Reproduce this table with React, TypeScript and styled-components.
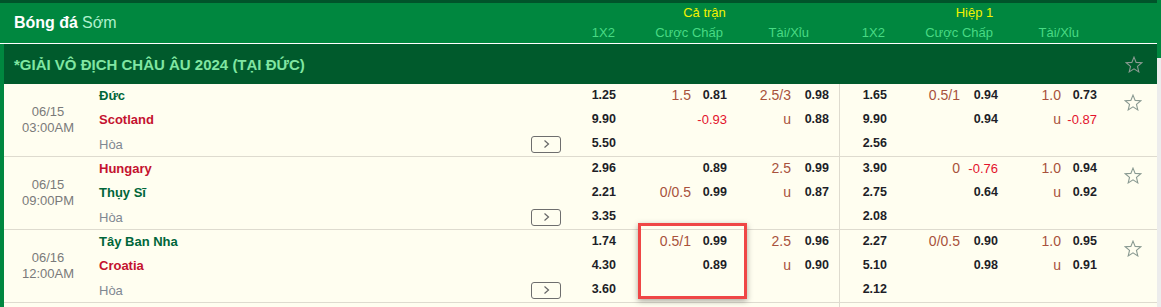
import React from "react";
import styled, { createGlobalStyle } from "styled-components";

const Global = createGlobalStyle`
  html, body { margin: 0; padding: 0; overflow: hidden; background: #f0f0f0; }
  body { font-family: "Liberation Sans", Arial, sans-serif; }
  * { box-sizing: border-box; }
`;

const COLS = "88px 474px 50px 75px 36px 64px 38px 11px 47px 73px 38px 63px 36px 60px";

const Page = styled.div`
  position: relative;
  width: 1161px;
  height: 307px;
  overflow: hidden;
`;

const TopStrip = styled.div`
  height: 3px;
  background: #00542a;
`;

const Frame = styled.div`
  display: flex;
`;

const Main = styled.div`
  width: 1157px;
  border-left: 4px solid #00873f;
  background: #fffef0;
`;

const ScrollTrack = styled.div`
  width: 4px;
  background: #ececec;
  margin-top: -3px;
  display: flex;
  flex-direction: column;
`;

const ScrollThumb = styled.div`
  height: 58px;
  background: #00873f;
`;

const Header = styled.div`
  display: grid;
  grid-template-columns: ${COLS};
  grid-template-rows: 19px 21px;
  height: 41px;
  background: #00873f;
  border-bottom: 1px solid #ffffff;
  margin-left: -4px;
  padding-left: 4px;
`;

const Title = styled.div`
  grid-column: 1 / 3;
  grid-row: 1 / 3;
  display: flex;
  align-items: center;
  padding-left: 10px;
  font-size: 16px;
  color: #aef0cc;
  b { color: #ffffff; font-weight: bold; margin-right: 4px; }
`;

const Group = styled.div<{ $from: number; $to: number; $shift: number }>`
  grid-row: 1;
  grid-column: ${(p) => p.$from} / ${(p) => p.$to};
  padding-left: ${(p) => p.$shift}px;
  text-align: center;
  font-size: 13px;
  line-height: 19px;
  color: #f2f200;
`;

const Label = styled.div<{ $from: number; $to: number; $pr: number }>`
  grid-row: 2;
  grid-column: ${(p) => p.$from} / ${(p) => p.$to};
  padding-right: ${(p) => p.$pr}px;
  text-align: right;
  font-size: 13px;
  line-height: 21px;
  color: #48da84;
  white-space: nowrap;
`;

const League = styled.div`
  height: 40px;
  background: #005a2c;
  display: flex;
  align-items: center;
  justify-content: space-between;
  padding: 0 14px 0 10px;
  font-size: 15px;
  font-weight: bold;
  color: #80e6a2;
`;

const Row = styled.div`
  display: grid;
  grid-template-columns: ${COLS};
  border-bottom: 1px solid #dedbcf;
`;

const DateCell = styled.div`
  display: flex;
  flex-direction: column;
  justify-content: center;
  align-items: center;
  font-size: 13px;
  line-height: 16px;
  color: #7a7a7a;
`;

const Stack = styled.div<{ $divider?: boolean }>`
  display: flex;
  flex-direction: column;
  align-items: flex-end;
  border-right: ${(p) => (p.$divider ? "1px solid #dedbcf" : "none")};
`;

const Line = styled.div`
  height: 24px;
  line-height: 23px;
  white-space: nowrap;
`;

const TeamCell = styled.div`
  display: flex;
  flex-direction: column;
  padding: 0 5px 0 7px;
`;

const Team = styled(Line)<{ $c: "g" | "r" }>`
  font-size: 13px;
  font-weight: bold;
  color: ${(p) => (p.$c === "g" ? "#00663a" : "#c4122f")};
`;

const DrawLine = styled(Line)`
  display: flex;
  justify-content: space-between;
  align-items: center;
`;

const Draw = styled.span`
  font-size: 13px;
  color: #7f8892;
  line-height: 23px;
`;

const MoreButton = styled.span`
  width: 30px;
  height: 17px;
  border: 1px solid #6e6e6e;
  border-radius: 3px;
  background: #fffef0;
  display: flex;
  align-items: center;
  justify-content: center;
`;

const Odd = styled(Line)<{ $neg?: boolean }>`
  font-size: ${(p) => (p.$neg ? "13px" : "12.5px")};
  font-weight: ${(p) => (p.$neg ? "normal" : "bold")};
  color: ${(p) => (p.$neg ? "#e3132c" : "#1e1e28")};
`;

const Hdp = styled(Line)`
  font-size: 14px;
  color: #a8523c;
`;

const StarCell = styled.div`
  padding: 10px 0 0 27px;
`;

const Highlight = styled.div`
  position: absolute;
  left: 638px;
  top: 223px;
  width: 109px;
  height: 76px;
  border: 3px solid #ef4646;
  box-shadow: 0 2px 6px rgba(0, 0, 0, 0.35);
`;

const Star = () => (
  <svg width="18" height="17" viewBox="0 0 24 23">
    <polygon
      points="12,1.5 14.9,8.6 22.5,9.1 16.7,14 18.5,21.5 12,17.4 5.5,21.5 7.3,14 1.5,9.1 9.1,8.6"
      fill="none"
      stroke="#8a9a92"
      strokeWidth="1.5"
      strokeLinejoin="miter"
    />
  </svg>
);

const Chevron = () => (
  <svg width="7" height="10" viewBox="0 0 7 10">
    <path d="M1.5 1.5 L5.5 5 L1.5 8.5" fill="none" stroke="#666" strokeWidth="1.2" />
  </svg>
);

type V = string | null;
type Odds = { v: string; neg?: boolean } | null;

type Match = {
  date: string;
  time: string;
  teams: [string, "g" | "r"][];
  x12: string[];
  hdpLine: V[];
  hdp: Odds[];
  ouLine: V[];
  ou: Odds[];
  hx12: string[];
  hHdpLine: V[];
  hHdp: Odds[];
  hOuLine: V[];
  hOu: Odds[];
};

const o = (v: string): Odds => ({ v, neg: v.startsWith("-") });

const matches: Match[] = [
  {
    date: "06/15",
    time: "03:00AM",
    teams: [["Đức", "g"], ["Scotland", "r"]],
    x12: ["1.25", "9.90", "5.50"],
    hdpLine: ["1.5", null],
    hdp: [o("0.81"), o("-0.93")],
    ouLine: ["2.5/3", "u"],
    ou: [o("0.98"), o("0.88")],
    hx12: ["1.65", "9.90", "2.56"],
    hHdpLine: ["0.5/1", null],
    hHdp: [o("0.94"), o("0.94")],
    hOuLine: ["1.0", "u"],
    hOu: [o("0.73"), o("-0.87")],
  },
  {
    date: "06/15",
    time: "09:00PM",
    teams: [["Hungary", "r"], ["Thụy Sĩ", "g"]],
    x12: ["2.96", "2.21", "3.35"],
    hdpLine: [null, "0/0.5"],
    hdp: [o("0.89"), o("0.99")],
    ouLine: ["2.5", "u"],
    ou: [o("0.99"), o("0.87")],
    hx12: ["3.90", "2.75", "2.08"],
    hHdpLine: ["0", null],
    hHdp: [o("-0.76"), o("0.64")],
    hOuLine: ["1.0", "u"],
    hOu: [o("0.94"), o("0.92")],
  },
  {
    date: "06/16",
    time: "12:00AM",
    teams: [["Tây Ban Nha", "g"], ["Croatia", "r"]],
    x12: ["1.74", "4.30", "3.60"],
    hdpLine: ["0.5/1", null],
    hdp: [o("0.99"), o("0.89")],
    ouLine: ["2.5", "u"],
    ou: [o("0.96"), o("0.90")],
    hx12: ["2.27", "5.10", "2.12"],
    hHdpLine: ["0/0.5", null],
    hHdp: [o("0.90"), o("0.98")],
    hOuLine: ["1.0", "u"],
    hOu: [o("0.95"), o("0.91")],
  },
  {
    date: "06/16",
    time: "03:00AM",
    teams: [["Ý", "g"], ["Albania", "r"]],
    x12: ["1.50", "7.00", "4.10"],
    hdpLine: ["1", null],
    hdp: [o("0.85"), o("0.97")],
    ouLine: ["2.5", "u"],
    ou: [o("0.92"), o("0.90")],
    hx12: ["2.10", "7.50", "2.05"],
    hHdpLine: ["0.5", null],
    hHdp: [o("0.96"), o("0.86")],
    hOuLine: ["1.0", "u"],
    hOu: [o("0.98"), o("0.84")],
  },
];

const LineCol = ({ vals }: { vals: V[] }) => (
  <Stack>
    {[0, 1, 2].map((i) => (
      <Hdp key={i}>{vals[i] ?? ""}</Hdp>
    ))}
  </Stack>
);

const OddCol = ({ vals }: { vals: Odds[] }) => (
  <Stack>
    {[0, 1, 2].map((i) => {
      const v = vals[i];
      return (
        <Odd key={i} $neg={v?.neg}>
          {v ? v.v : ""}
        </Odd>
      );
    })}
  </Stack>
);

const X12Col = ({ vals }: { vals: string[] }) => (
  <Stack>
    {vals.map((v, i) => (
      <Odd key={i}>{v}</Odd>
    ))}
  </Stack>
);

const MatchRow = ({ m }: { m: Match }) => (
  <Row>
    <DateCell>
      <span>{m.date}</span>
      <span>{m.time}</span>
    </DateCell>
    <TeamCell>
      {m.teams.map(([n, c]) => (
        <Team key={n} $c={c}>
          {n}
        </Team>
      ))}
      <DrawLine>
        <Draw>Hòa</Draw>
        <MoreButton>
          <Chevron />
        </MoreButton>
      </DrawLine>
    </TeamCell>
    <X12Col vals={m.x12} />
    <LineCol vals={m.hdpLine} />
    <OddCol vals={m.hdp} />
    <LineCol vals={m.ouLine} />
    <OddCol vals={m.ou} />
    <Stack $divider />
    <X12Col vals={m.hx12} />
    <LineCol vals={m.hHdpLine} />
    <OddCol vals={m.hHdp} />
    <LineCol vals={m.hOuLine} />
    <OddCol vals={m.hOu} />
    <StarCell>
      <Star />
    </StarCell>
  </Row>
);

export default function App() {
  return (
    <Page>
      <Global />
      <TopStrip />
      <Frame>
        <Main>
          <Header>
            <Title>
              <b>Bóng đá</b> Sớm
            </Title>
            <Group $from={3} $to={9} $shift={3}>Cả trận</Group>
            <Group $from={9} $to={14} $shift={12}>Hiệp 1</Group>
            <Label $from={3} $to={4} $pr={1}>1X2</Label>
            <Label $from={4} $to={6} $pr={4}>Cược Chấp</Label>
            <Label $from={6} $to={8} $pr={20}>Tài/Xỉu</Label>
            <Label $from={9} $to={10} $pr={2}>1X2</Label>
            <Label $from={10} $to={12} $pr={5}>Cược Chấp</Label>
            <Label $from={12} $to={14} $pr={18}>Tài/Xỉu</Label>
          </Header>
          <League>
            <span>*GIẢI VÔ ĐỊCH CHÂU ÂU 2024 (TẠI ĐỨC)</span>
            <Star />
          </League>
          {matches.map((m, i) => (
            <MatchRow key={i} m={m} />
          ))}
        </Main>
        <ScrollTrack>
          <ScrollThumb />
        </ScrollTrack>
      </Frame>
      <Highlight />
    </Page>
  );
}
